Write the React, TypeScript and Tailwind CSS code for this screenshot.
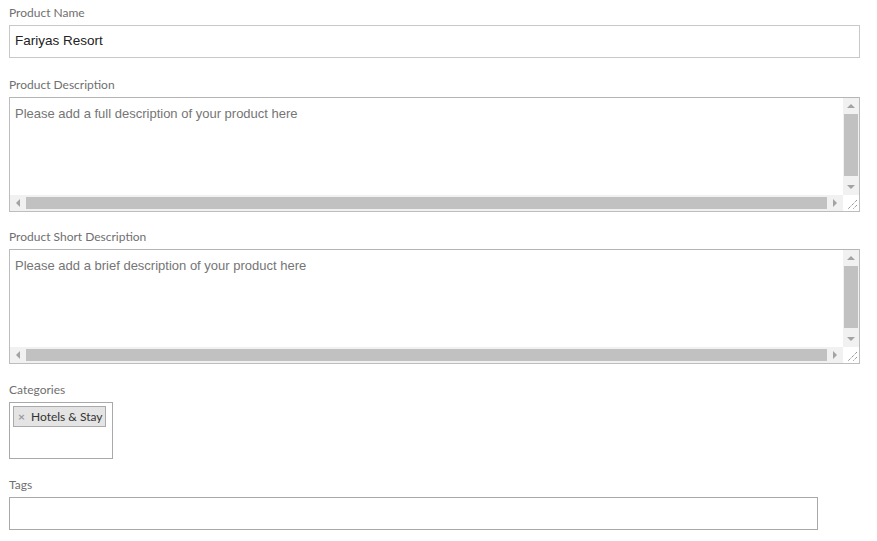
import React from "react";

const labelCls = "block text-[12px] leading-[16px] text-[#6f6f6f] font-['Lato',sans-serif] mb-[4px]";

const Arrow = ({ dir }: { dir: "up" | "down" | "left" | "right" }) => {
  const pts = {
    up: "4,2 8,6 0,6",
    down: "0,2 8,2 4,6",
    left: "6,0 6,8 2,4",
    right: "2,0 2,8 6,4",
  }[dir];
  return (
    <svg width="8" height="8" viewBox="0 0 8 8" className="block">
      <polygon points={pts} fill="#a3a3a3" />
    </svg>
  );
};

const FakeTextarea = ({ placeholder }: { placeholder: string }) => (
  <div className="grid grid-cols-[1fr_16px] grid-rows-[97px_16px] h-[115px] border border-[#bdbdbd] border-t-[#b5b5b5] bg-white">
    <div className="px-[5px] pt-[8px] text-[13px] leading-[16px] text-[#757575] font-['Liberation_Sans',Arial,sans-serif]">
      {placeholder}
    </div>
    {/* vertical scrollbar */}
    <div className="flex flex-col bg-[#f1f1f1]">
      <div className="h-[16px] flex items-center justify-center">
        <Arrow dir="up" />
      </div>
      <div className="mx-[1px] h-[62px] bg-[#c1c1c1]" />
      <div className="flex-1" />
      <div className="h-[16px] flex items-center justify-center">
        <Arrow dir="down" />
      </div>
    </div>
    {/* horizontal scrollbar */}
    <div className="flex bg-[#f1f1f1]">
      <div className="w-[16px] flex items-center justify-center">
        <Arrow dir="left" />
      </div>
      <div className="flex-1 my-[2px] bg-[#c1c1c1]" />
      <div className="w-[16px] flex items-center justify-center">
        <Arrow dir="right" />
      </div>
    </div>
    {/* resizer */}
    <div className="bg-white flex items-end justify-end">
      <svg width="16" height="16" viewBox="0 0 16 16" className="block">
        <line x1="14" y1="5" x2="5" y2="14" stroke="#6a6a6a" strokeWidth="1" strokeDasharray="1 1" />
        <line x1="14" y1="10" x2="10" y2="14" stroke="#6a6a6a" strokeWidth="1" strokeDasharray="1 1" />
      </svg>
    </div>
  </div>
);

export default function App() {
  return (
    <div className="w-[877px] h-[541px] bg-white pl-[9px] pr-[17px] pt-[5px] overflow-hidden">
      {/* Product Name */}
      <label className={labelCls}>Product Name</label>
      <div className="h-[33px] border border-[#c8c8c8] flex items-center px-[5px] text-[13.5px] text-[#222] font-['Liberation_Sans',Arial,sans-serif]">
        Fariyas Resort
      </div>

      {/* Product Description */}
      <div className="mt-[19px]">
        <label className={labelCls}>Product Description</label>
        <FakeTextarea placeholder="Please add a full description of your product here" />
      </div>

      {/* Product Short Description */}
      <div className="mt-[17px]">
        <label className={labelCls}>Product Short Description</label>
        <FakeTextarea placeholder="Please add a brief description of your product here" />
      </div>

      {/* Categories */}
      <div className="mt-[18px]">
        <label className={labelCls}>Categories</label>
        <div className="w-[104px] h-[57px] border border-[#a9a9a9] p-[3px] flex items-start">
          <span className="inline-flex items-center whitespace-nowrap h-[21px] pl-[4px] pr-[2px] border border-[#aaa] bg-[#e4e4e4] text-[12px] leading-none text-[#333] font-['Lato',sans-serif]">
            <span className="text-[#999] text-[12px] font-bold mr-[6px] leading-none">×</span>
            Hotels &amp; Stay
          </span>
        </div>
      </div>

      {/* Tags */}
      <div className="mt-[18px]">
        <label className={labelCls}>Tags</label>
        <div className="w-[809px] h-[33px] border border-[#a9a9a9]" />
      </div>
    </div>
  );
}
